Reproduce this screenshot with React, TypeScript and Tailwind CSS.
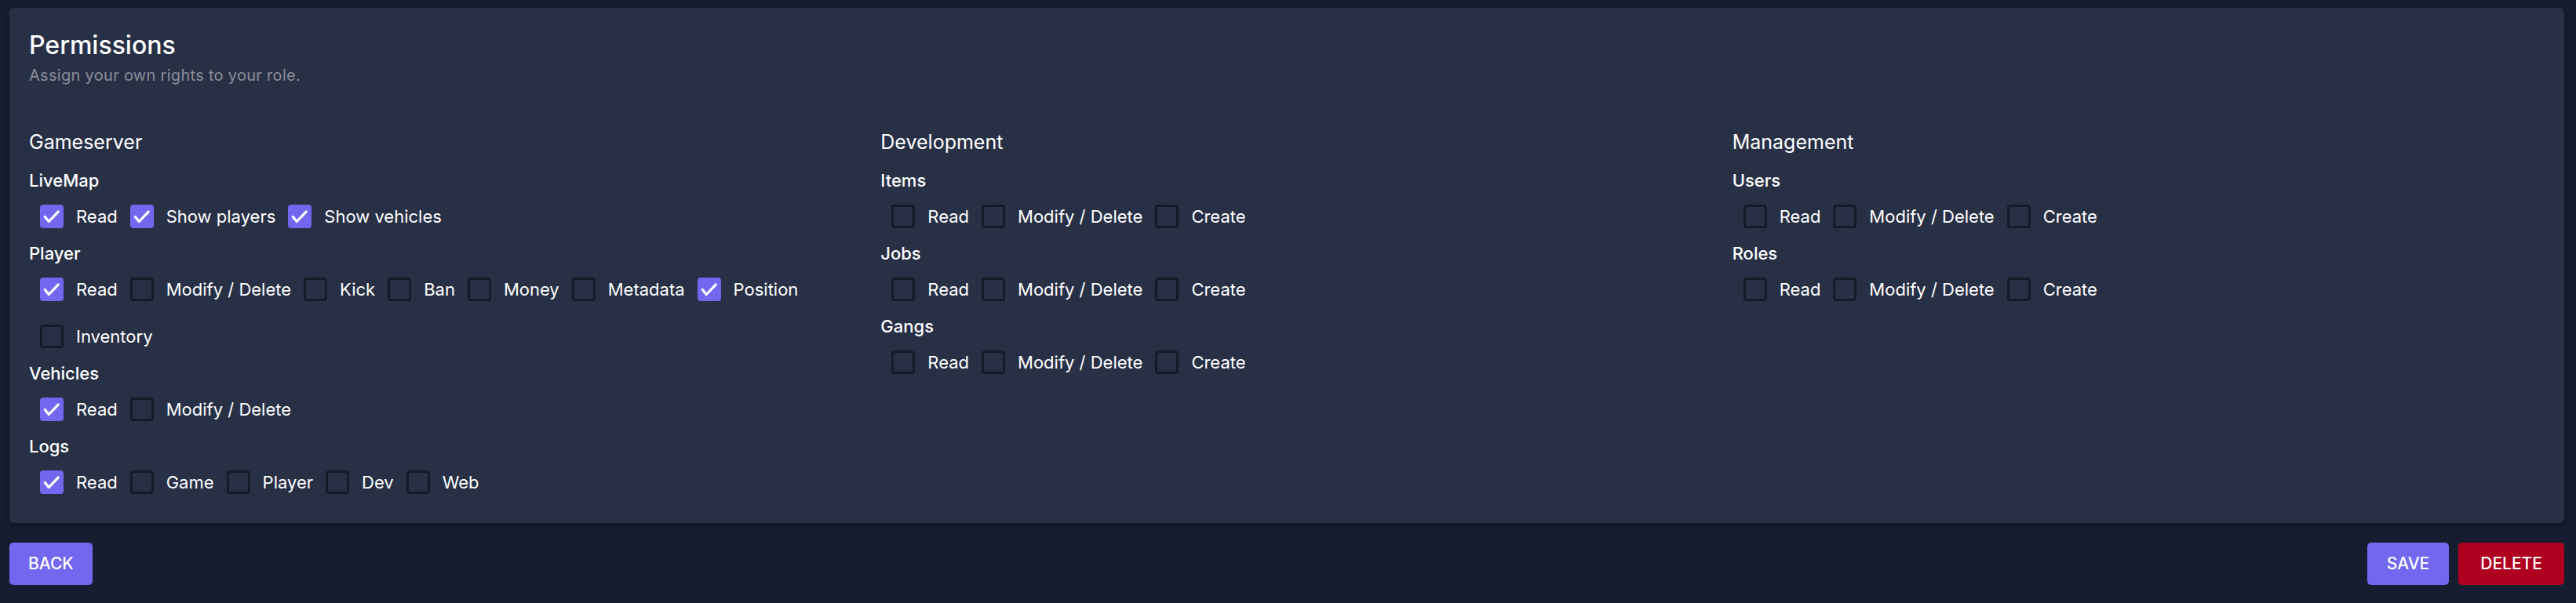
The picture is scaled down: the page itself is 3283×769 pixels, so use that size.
import { useState } from "react";

type Perm = { label: string; checked: boolean };
type Section = { name: string; perms: Perm[] };
type Group = { title: string; sections: Section[] };

const p = (label: string, checked = false): Perm => ({ label, checked });
const crud = () => [p("Read"), p("Modify / Delete"), p("Create")];

const GROUPS: Group[] = [
  {
    title: "Gameserver",
    sections: [
      { name: "LiveMap", perms: [p("Read", true), p("Show players", true), p("Show vehicles", true)] },
      {
        name: "Player",
        perms: [
          p("Read", true),
          p("Modify / Delete"),
          p("Kick"),
          p("Ban"),
          p("Money"),
          p("Metadata"),
          p("Position", true),
          p("Inventory"),
        ],
      },
      { name: "Vehicles", perms: [p("Read", true), p("Modify / Delete")] },
      { name: "Logs", perms: [p("Read", true), p("Game"), p("Player"), p("Dev"), p("Web")] },
    ],
  },
  {
    title: "Development",
    sections: [
      { name: "Items", perms: crud() },
      { name: "Jobs", perms: crud() },
      { name: "Gangs", perms: crud() },
    ],
  },
  {
    title: "Management",
    sections: [
      { name: "Users", perms: crud() },
      { name: "Roles", perms: crud() },
    ],
  },
];

function Checkbox({ label, initial }: { label: string; initial: boolean }) {
  const [checked, setChecked] = useState(initial);
  return (
    <label className="flex items-center gap-4 cursor-pointer select-none">
      <span
        onClick={() => setChecked(!checked)}
        className={`w-[30px] h-[30px] rounded-[4px] flex items-center justify-center shrink-0 ${
          checked ? "bg-[#7367f0]" : "border-[3px] border-[#151a27]"
        }`}
      >
        {checked && (
          <svg className="w-[26px] h-[26px]" viewBox="0 0 24 24" fill="none" stroke="white" strokeWidth={3} strokeLinecap="round" strokeLinejoin="round">
            <path d="M4 12.5l4.5 5.5L19.5 6.5" />
          </svg>
        )}
      </span>
      <span className="text-[22px] leading-[30px] text-white">{label}</span>
    </label>
  );
}

export default function App() {
  return (
    <div className="min-h-screen bg-[#161d31] pt-[10px] pl-[12px] pr-[15px] font-[Inter,sans-serif]">
      {/* Panel */}
      <div className="bg-[#283046] rounded-[6px] shadow-[0_4px_10px_rgba(0,0,0,0.25)] px-[25px] pt-[28px] pb-[37px]">
        <h1 className="text-[32px] leading-[40px] font-medium text-white">Permissions</h1>
        <p className="mt-[4px] text-[20px] leading-[28px] text-[#8a8e98] tracking-[0.3px]">
          Assign your own rights to your role.
        </p>

        <div className="mt-[54px] grid grid-cols-3 gap-x-[50px]">
          {GROUPS.map((g) => (
            <div key={g.title} className="flex flex-col">
              <h2 className="text-[25px] leading-[34px] text-white">{g.title}</h2>
              {g.sections.map((s) => (
                <div key={s.name} className="mt-[16px]">
                  <div className="text-[22px] leading-[32px] font-medium text-white">{s.name}</div>
                  <div className="mt-[15px] pl-[14px] flex flex-wrap gap-x-4 gap-y-[30px]">
                    {s.perms.map((perm) => (
                      <Checkbox key={perm.label} label={perm.label} initial={perm.checked} />
                    ))}
                  </div>
                </div>
              ))}
            </div>
          ))}
        </div>
      </div>

      {/* Actions */}
      <div className="mt-[25px] flex items-center justify-between">
        <button className="h-[54px] px-[24px] rounded-[5px] bg-[#7367f0] text-white text-[21px] font-medium">
          BACK
        </button>
        <div className="flex gap-[12px]">
          <button className="h-[54px] px-[25px] rounded-[5px] bg-[#7367f0] text-white text-[21px] font-medium">
            SAVE
          </button>
          <button className="h-[54px] px-[28px] rounded-[5px] bg-[#b00020] text-white text-[21px] font-medium">
            DELETE
          </button>
        </div>
      </div>
    </div>
  );
}
